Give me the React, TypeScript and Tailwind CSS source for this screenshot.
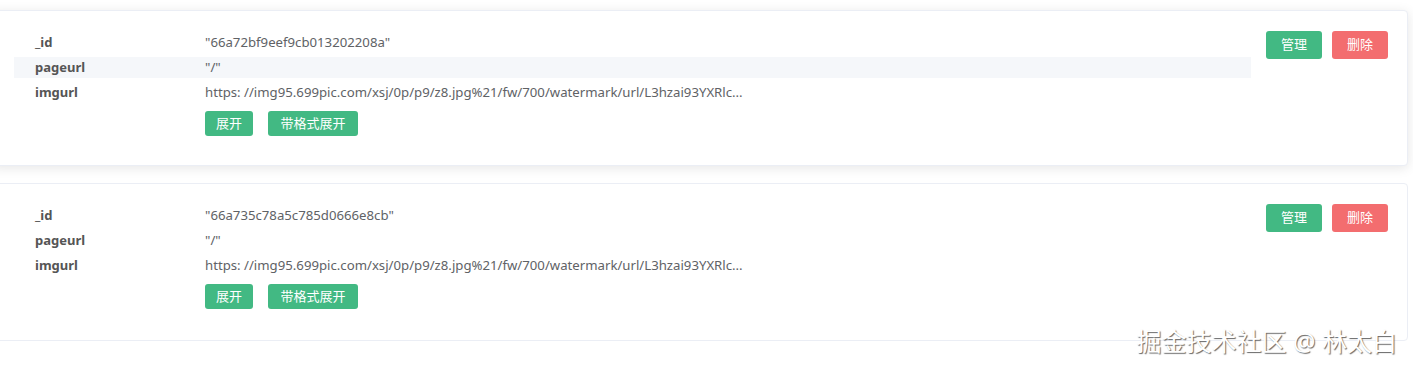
import React from 'react';

interface Row {
  key: string;
  value: string;
}

interface Record {
  rows: Row[];
  shadow: boolean;
  highlight?: number;
}

const records: Record[] = [
  {
    shadow: true,
    highlight: 1,
    rows: [
      { key: '_id', value: '"66a72bf9eef9cb013202208a"' },
      { key: 'pageurl', value: '"/"' },
      { key: 'imgurl', value: 'https: //img95.699pic.com/xsj/0p/p9/z8.jpg%21/fw/700/watermark/url/L3hzai93YXRlc...' },
    ],
  },
  {
    shadow: false,
    rows: [
      { key: '_id', value: '"66a735c78a5c785d0666e8cb"' },
      { key: 'pageurl', value: '"/"' },
      { key: 'imgurl', value: 'https: //img95.699pic.com/xsj/0p/p9/z8.jpg%21/fw/700/watermark/url/L3hzai93YXRlc...' },
    ],
  },
];

function RecordCard({ rec }: { rec: Record }) {
  return (
    <div
      className={`flex -ml-2 w-[1416px] rounded border border-[#ebeef5] bg-white pt-5 ${
        rec.shadow ? 'shadow-[0_2px_12px_0_rgba(0,0,0,0.1)] pb-[29px]' : 'pb-[31px]'
      }`}
    >
      {/* tabla de campos */}
      <div className="ml-[21px] w-[1237px] pt-px">
        {rec.rows.map((row, i) => (
          <div
            key={row.key}
            className={`flex h-[21px] items-center pl-[21px] ${i > 0 ? 'mt-1' : ''} ${
              rec.highlight === i ? 'bg-[#f5f7fa]' : ''
            }`}
          >
            <span className="w-[170px] font-bold text-[#555]">{row.key}</span>
            <span className="text-[13.2px] text-[#606266]">{row.value}</span>
          </div>
        ))}
        <div className="ml-[191px] mt-2 flex gap-[15px]">
          <button className="h-[25px] w-[48px] rounded-[3px] bg-[#42b983] text-white">展开</button>
          <button className="h-[25px] w-[90px] rounded-[3px] bg-[#42b983] text-white">带格式展开</button>
        </div>
      </div>

      {/* acciones */}
      <div className="ml-[15px] flex gap-[10px]">
        <button className="h-[28px] w-[56px] rounded-[3px] bg-[#42b983] text-white">管理</button>
        <button className="h-[28px] w-[56px] rounded-[3px] bg-[#f36d6f] text-white">删除</button>
      </div>
    </div>
  );
}

export default function App() {
  return (
    <div
      className="relative h-[366px] w-[1413px] overflow-hidden bg-white pt-[10px] text-[13px]"
      style={{ fontFamily: '"Noto Sans", "Noto Sans CJK SC", sans-serif' }}
    >
      <div className="flex flex-col gap-[17px]">
        {records.map((rec, i) => (
          <RecordCard key={i} rec={rec} />
        ))}
      </div>

      {/* marca de agua */}
      <div className="absolute bottom-[12px] right-[16px] text-[25px] leading-none text-white [text-shadow:1px_1px_1px_rgba(0,0,0,0.6)]">
        掘金技术社区 @ 林太白
      </div>
    </div>
  );
}
